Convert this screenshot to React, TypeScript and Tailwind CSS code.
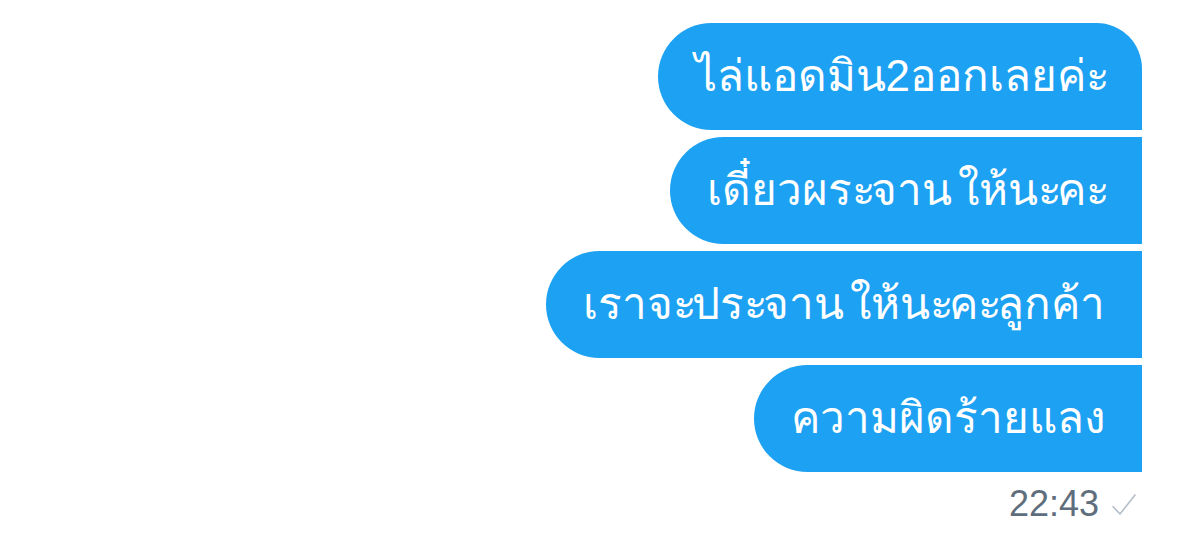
const messages = [
    { id: 1, text: 'ไล่แอดมิน2ออกเลยค่ะ', first: true },
    { id: 2, text: 'เดี๋ยวผระจาน ให้นะคะ', first: false },
    { id: 3, text: 'เราจะประจาน ให้นะคะลูกค้า', first: false },
    { id: 4, text: 'ความผิดร้ายแลง', first: false },
];

// the fallback Thai font sets sara a (ะ) wider than the phone font does
function tighten(text: string) {
    return text.split(/(ะ)/).map((part, i) =>
        part === 'ะ' ? (
            <span key={i} className="tracking-[-5px]">
                {part}
            </span>
        ) : (
            part
        )
    );
}

function Bubble({ text, first }: { text: string; first: boolean }) {
    return (
        <div
            className={`flex h-[107px] items-center whitespace-nowrap rounded-l-[54px] bg-[#1da1f2] pl-[37px] pr-[37px] text-[44px] leading-none text-white ${
                first ? 'rounded-tr-[46px]' : ''
            }`}
        >
            <span className="pb-[2px] [word-spacing:-6px]">{tighten(text)}</span>
        </div>
    );
}

export default function App() {
    return (
        <div className="flex h-[536px] w-[1200px] flex-col items-end bg-white pt-[23px] pr-[58px] font-['Liberation_Sans',sans-serif]">
            <div className="flex flex-col items-end gap-[7px]">
                {messages.map((m) => (
                    <Bubble key={m.id} text={m.text} first={m.first} />
                ))}
            </div>

            {/* Timestamp */}
            <div className="mt-[14px] flex items-center gap-[13px] pr-[6px]">
                <span className="text-[36px] leading-none text-[#5f6e7c]">22:43</span>
                <svg viewBox="0 0 24 21" className="h-[21px] w-[24px]" fill="none">
                    <path d="M1 12.5 8 20 23 1" stroke="#b4bec8" strokeWidth="1.6" strokeLinecap="round" strokeLinejoin="round" />
                </svg>
            </div>
        </div>
    );
}
